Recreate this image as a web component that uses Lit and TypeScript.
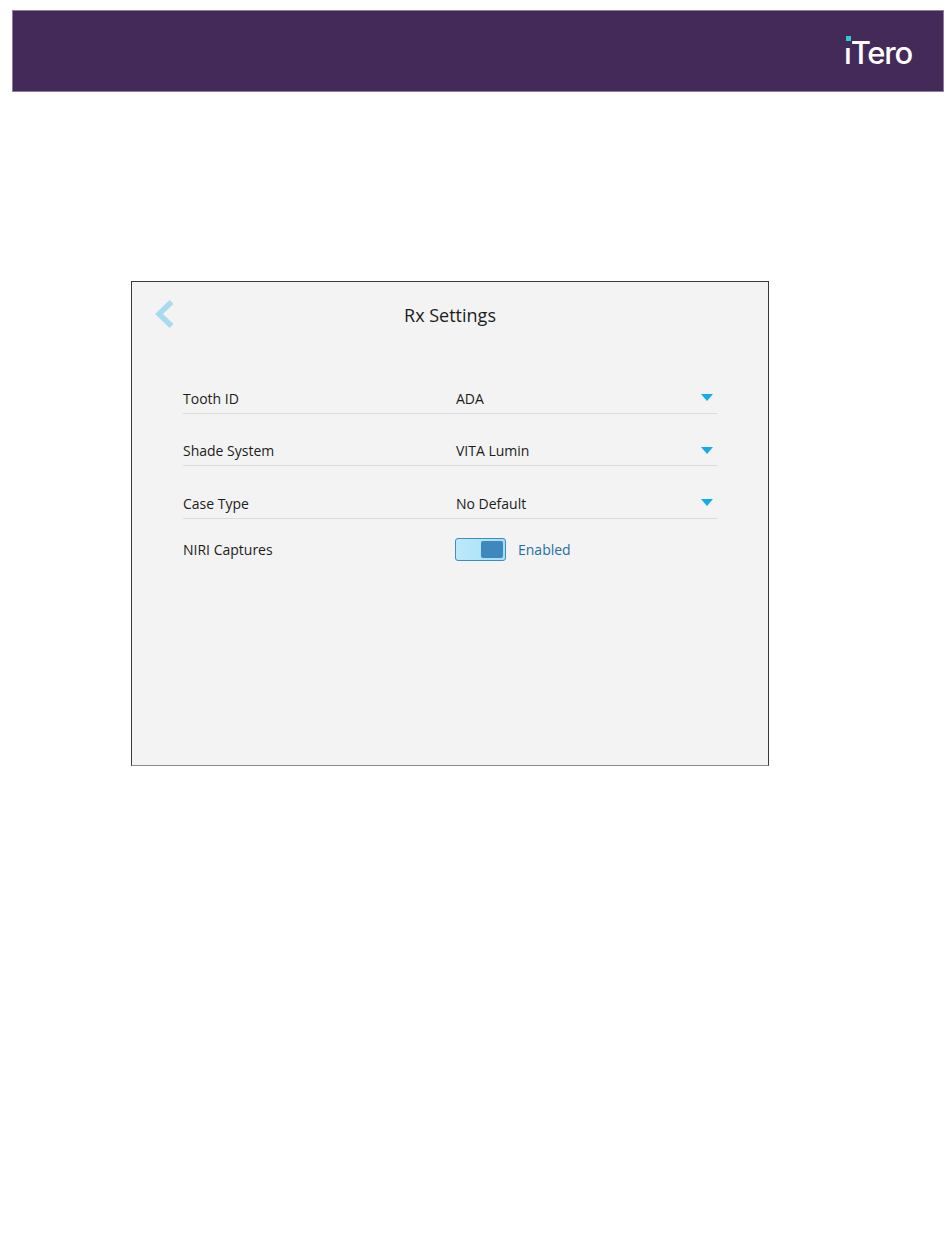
import { LitElement, html, css } from 'lit';
import { customElement } from 'lit/decorators.js';

const rows = [
  { label: 'Tooth ID', value: 'ADA' },
  { label: 'Shade System', value: 'VITA Lumin' },
  { label: 'Case Type', value: 'No Default' },
];

@customElement('app-root')
export class AppRoot extends LitElement {
  static styles = css`
    :host {
      display: block;
      height: 1241px;
      background: #fff;
      font-family: 'Open Sans', 'Noto Sans', sans-serif;
      color: #1c1c1c;
      overflow: hidden;
    }
    .banner {
      margin: 10px 6px 0 12px;
      height: 82px;
      box-sizing: border-box;
      background: #442a58;
      border: 1px solid #8d7c9b;
      display: flex;
      justify-content: flex-end;
      padding: 23px 31px 0 0;
    }
    .logo {
      position: relative;
      font-family: Inter, sans-serif;
      font-weight: 500;
      font-size: 31px;
      line-height: 38px;
      letter-spacing: -1.2px;
      color: #fff;
      height: 38px;
    }
    .logo .mask {
      position: absolute;
      left: 0;
      top: 5px;
      width: 8px;
      height: 9px;
      background: #442a58;
    }
    .logo .dot {
      position: absolute;
      left: 2px;
      top: 2px;
      width: 5px;
      height: 5px;
      background: #2ccdd0;
    }
    .card {
      margin: 189px 0 0 131px;
      width: 638px;
      height: 485px;
      box-sizing: border-box;
      background: #f3f3f3;
      border: 1px solid #3a3a3a;
      border-bottom-color: #8a8a8a;
      padding: 17px 51px 0 51px;
    }
    .head {
      position: relative;
      height: 62px;
      text-align: center;
      font-size: 18px;
      line-height: 32px;
      color: #1c1c1c;
    }
    .back {
      position: absolute;
      left: -29px;
      top: -1px;
      display: block;
    }
    .row {
      display: flex;
      align-items: flex-end;
      height: 52.5px;
      box-sizing: border-box;
      border-bottom: 1.5px solid #dcdcdc;
      font-size: 14px;
      line-height: 26px;
      padding-bottom: 1px;
      position: relative;
    }
    .row:first-of-type {
      height: 50px;
    }
    .label {
      width: 273px;
    }
    .tri {
      position: absolute;
      right: 4px;
      top: 33px;
      width: 0;
      height: 0;
      border-left: 6px solid transparent;
      border-right: 6px solid transparent;
      border-top: 7px solid #12ade6;
    }
    .row:first-of-type .tri {
      top: 31px;
    }
    .niri {
      display: flex;
      align-items: center;
      height: 61px;
      font-size: 14px;
    }
    .niri .label {
      width: 272px;
    }
    .toggle {
      box-sizing: border-box;
      width: 51px;
      height: 23px;
      margin-right: 12px;
      border: 1px solid #3f8cbf;
      border-radius: 3px;
      background: linear-gradient(90deg, #bde9fa, #a5def5);
      display: flex;
      justify-content: flex-end;
      padding: 2px;
    }
    .knob {
      width: 22px;
      background: #3e88bd;
      border-radius: 2px;
    }
    .state {
      color: #1f6ea6;
    }
  `;

  render() {
    return html`
      <div class="banner">
        <div class="logo">iTero<span class="mask"></span><span class="dot"></span></div>
      </div>
      <div class="card">
        <div class="head">
          <svg class="back" width="22" height="32" viewBox="0 0 22 32">
            <path d="M17.5 4 L5 16 L17.5 28" fill="none" stroke="#a6dcee" stroke-width="5.5"></path>
          </svg>
          Rx Settings
        </div>
        ${rows.map(r => html`
          <div class="row">
            <span class="label">${r.label}</span>
            <span>${r.value}</span>
            <span class="tri"></span>
          </div>
        `)}
        <div class="niri">
          <span class="label">NIRI Captures</span>
          <span class="toggle"><span class="knob"></span></span>
          <span class="state">Enabled</span>
        </div>
      </div>
    `;
  }
}
